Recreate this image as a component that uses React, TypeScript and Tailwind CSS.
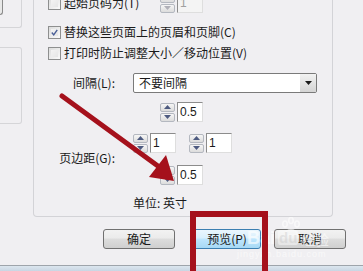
import React from "react";

const cjk = { fontFamily: '"Noto Sans CJK SC", "Noto Sans", sans-serif' };
const latin = { fontFamily: '"Liberation Sans", Arial, sans-serif' };

function Checkbox({ checked }: { checked?: boolean }) {
  return (
    <div className="w-[13px] h-[13px] border border-[#8e8f8f] bg-gradient-to-br from-[#dcdcdc] to-[#fbfbfb] p-[2px] shrink-0">
      <div className="w-full h-full bg-gradient-to-br from-[#f4f4f4] to-[#e6e6e6] flex items-center justify-center">
        {checked && (
          <svg width="9" height="9" viewBox="0 0 9 9">
            <path d="M1 4.5 L3.5 7.5 L8 1" fill="none" stroke="#4a5f97" strokeWidth="1.8" />
          </svg>
        )}
      </div>
    </div>
  );
}

function SpinBtn({ up, dim }: { up?: boolean; dim?: boolean }) {
  return (
    <div className="w-[15px] h-[9px] border border-[#b4b8c0] rounded-[2px] bg-gradient-to-b from-[#f6f6f6] to-[#dcdcdc] flex items-center justify-center">
      <svg width="7" height="4" viewBox="0 0 7 4">
        {up ? (
          <path d="M0 4 L3.5 0 L7 4 Z" fill={dim ? "#b0b0b8" : "#4d5a80"} />
        ) : (
          <path d="M0 0 L7 0 L3.5 4 Z" fill={dim ? "#b0b0b8" : "#4d5a80"} />
        )}
      </svg>
    </div>
  );
}

function Spinner({ value, disabled }: { value: string; disabled?: boolean }) {
  return (
    <div className="flex items-center gap-[2px] h-[20px]">
      <div className="flex flex-col gap-[1px]">
        <SpinBtn up dim={disabled} />
        <SpinBtn dim={disabled} />
      </div>
      <div
        className={`w-[26px] h-[20px] border border-t-[#8c8c8c] border-l-[#8c8c8c] border-r-[#dedede] border-b-[#dedede] ${
          disabled ? "bg-[#f4f4f4] text-[#a0a0a0]" : "bg-white text-[#1a1a1a]"
        } text-[12px] leading-[18px] pl-[2px]`}
        style={latin}
      >
        {value}
      </div>
    </div>
  );
}

function Btn({ label, primary }: { label: string; primary?: boolean }) {
  return (
    <div
      className={`h-[20px] rounded-[3px] border flex items-center justify-center text-[12px] text-[#1a1a1a] ${
        primary
          ? "w-[68px] border-[#3c7fb1] bg-[linear-gradient(to_bottom,#eaf6fd_0%,#d9f0fc_45%,#bee6fd_50%,#a7d9f5_100%)]"
          : "w-[72px] border-[#707070] bg-[linear-gradient(to_bottom,#f2f2f2_0%,#ebebeb_45%,#dddddd_50%,#cfcfcf_100%)]"
      }`}
      style={cjk}
    >
      {label}
    </div>
  );
}

export default function App() {
  return (
    <div className="relative w-[363px] h-[271px] overflow-hidden bg-[#f0eff2] flex flex-col" style={cjk}>
      <div className="flex h-[217px]">
        {/* left column */}
        <div className="w-[22px] flex flex-col shrink-0">
          <div className="h-[28px] border-r border-b border-[#d5d5d8] rounded-br-[3px] relative">
            <div className="w-[3px] h-[15px] border-r border-b border-[#8a8a8a] rounded-br-[3px] bg-[#e8e8e8]" />
          </div>
          <div className="mt-[19px] h-[77px] border-r border-y border-[#d5d5d8] rounded-r-[3px]" />
        </div>
        {/* group box */}
        <div className="ml-[11px] w-[300px] h-[217px] border-x border-b border-[#d3d3d7] rounded-b-[4px] pl-[14px] flex flex-col">
          {/* row 1 */}
          <div className="-mt-[7px] h-[20px] flex items-center">
            <Checkbox />
            <span className="ml-[3px] text-[12px] text-[#1a1a1a] w-[96px]">起始页码为(T)</span>
            <Spinner value="1" disabled />
          </div>
          {/* row 2 */}
          <div className="mt-[10px] h-[18px] flex items-center">
            <Checkbox checked />
            <span className="ml-[3px] text-[12px] text-[#1a1a1a] whitespace-nowrap">替换这些页面上的页眉和页脚(C)</span>
          </div>
          {/* row 3 */}
          <div className="mt-[3px] h-[18px] flex items-center">
            <Checkbox />
            <span className="ml-[3px] text-[12px] text-[#1a1a1a] whitespace-nowrap">打印时防止调整大小／移动位置(V)</span>
          </div>
          {/* row 4 */}
          <div className="mt-[11px] h-[20px] flex items-center">
            <div className="w-[67px] text-right text-[12px] text-[#1a1a1a]">间隔(L):</div>
            <div className="ml-[18px] w-[184px] h-[20px] border border-[#7a7a7a] rounded-[2px] bg-white flex items-center">
              <span className="pl-[5px] text-[12px] text-[#1a1a1a] flex-1">不要间隔</span>
              <div className="w-[16px] h-full bg-gradient-to-b from-[#f2f2f2] to-[#d4d4d4] flex items-center justify-center">
                <svg width="7" height="4" viewBox="0 0 7 4">
                  <path d="M0 0 L7 0 L3.5 4 Z" fill="#1a1a1a" />
                </svg>
              </div>
            </div>
          </div>
          {/* margins block */}
          <div className="flex">
            <div className="w-[67px] text-right text-[12px] text-[#1a1a1a] pt-[56px] whitespace-nowrap">页边距(G):</div>
            <div className="flex flex-col ml-[18px]">
              <div className="mt-[9px] pl-[27px]">
                <Spinner value="0.5" />
              </div>
              <div className="mt-[11px] flex gap-[13px]">
                <Spinner value="1" />
                <Spinner value="1" />
              </div>
              <div className="mt-[12px] pl-[27px]">
                <Spinner value="0.5" />
              </div>
              <div className="mt-[10px] text-[12px] text-[#1a1a1a] leading-[16px]">单位: 英寸</div>
            </div>
          </div>
        </div>
      </div>
      {/* buttons */}
      <div className="mt-[12px] flex pl-[103px] gap-[18px]">
        <Btn label="确定" />
        <Btn label="预览(P)" primary />
        <div className="ml-[-5px]">
          <Btn label="取消" />
        </div>
      </div>
      {/* bottom strip */}
      <div className="mt-auto h-[6px] border-t border-[#9ea4ab] bg-gradient-to-b from-[#dce6ef] to-[#c9d6e3]" />

      {/* Baidu watermark */}
      <div className="absolute left-[240px] top-[212px] w-[100px] h-[50px] pointer-events-none opacity-60 text-white">
        <svg className="absolute left-[40px] top-[5px]" width="22" height="20" viewBox="0 0 22 20">
          <g fill="none" stroke="#ffffff" strokeWidth="1.6">
            <ellipse cx="5" cy="7" rx="2.2" ry="3" />
            <ellipse cx="11" cy="3.5" rx="2.2" ry="3" />
            <ellipse cx="17" cy="7" rx="2.2" ry="3" />
            <path d="M5 18 C5 11 17 11 17 18 Z" />
          </g>
        </svg>
        <span className="absolute left-[7px] top-[17px] text-[18px] font-bold leading-none" style={latin}>
          Bai
        </span>
        <span className="absolute left-[38px] top-[18px] text-[15px] font-bold leading-none bg-white/70 text-[#dcdcdc] px-[1px] rounded-[2px]" style={latin}>
          du
        </span>
        <span className="absolute left-[61px] top-[20px] text-[14px] leading-none">经验</span>
        <span className="absolute left-[-3px] top-[38px] text-[9px] leading-none tracking-[1px]" style={latin}>
          jingyan.baidu.com
        </span>
      </div>

      {/* red annotation arrow */}
      <svg className="absolute left-0 top-0 pointer-events-none" width="363" height="271" viewBox="0 0 363 271">
        <line x1="62" y1="96" x2="162" y2="169" stroke="#a5111c" strokeWidth="5" strokeLinecap="round" />
        <polygon points="174,181 149,177 166,155" fill="#a5111c" />
      </svg>
      {/* red highlight rectangle */}
      <div className="absolute left-[190px] top-[211px] w-[78px] h-[66px] border-[6px] border-[#a5111c] pointer-events-none" />
    </div>
  );
}
